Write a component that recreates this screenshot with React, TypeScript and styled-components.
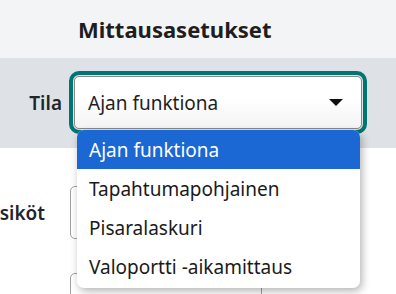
import styled, { createGlobalStyle } from 'styled-components'

const Global = createGlobalStyle`
  html, body {
    margin: 0;
    padding: 0;
    background: #ffffff;
    overflow: hidden;
  }
  body {
    font-family: "Noto Sans", "Open Sans", sans-serif;
    color: #212529;
  }
`

const Page = styled.div`
  width: 396px;
  height: 294px;
  position: relative;
  overflow: hidden;
`

const Header = styled.header`
  height: 58px;
  background-color: #f3f4f6;
  display: flex;
  align-items: center;
  padding-left: 78px;

  h1 {
    margin: 0;
    font-size: 22px;
    font-weight: 700;
    color: #1e1e1e;
  }
`

const Band = styled.div`
  height: 90px;
  background-color: #dee2e6;
`

const Row = styled.div<{ $top: number; $labelEnd: number }>`
  display: grid;
  grid-template-columns: 62px 1fr;
  align-items: center;
  column-gap: 12px;
  padding-top: ${(p) => p.$top}px;

  label {
    justify-self: end;
    white-space: nowrap;
    font-size: 19px;
    font-weight: 600;
    padding-right: ${(p) => 62 - p.$labelEnd}px;
  }
`

const SelectWrap = styled.div`
  position: relative;
  width: 288px;
`

const SelectBox = styled.div`
  box-sizing: border-box;
  height: 53px;
  display: flex;
  align-items: center;
  justify-content: space-between;
  padding: 0 18px 0 13px;
  border: 1px solid #8a8a8a;
  border-radius: 5px;
  background: linear-gradient(#ffffff 40%, #f4f4f4);
  outline: 4px solid #007572;
  outline-offset: 1px;
  font-size: 19px;
  color: #1f1f1f;
`

const Caret = styled.span`
  width: 0;
  height: 0;
  border-left: 7px solid transparent;
  border-right: 7px solid transparent;
  border-top: 7px solid #111;
`

const ListBox = styled.ul`
  position: absolute;
  top: 54px;
  left: 3px;
  width: 283px;
  margin: 0;
  padding: 0 0 2px;
  list-style: none;
  background: #ffffff;
  border-radius: 7px;
  overflow: hidden;
  box-shadow: 2px 3px 8px rgba(0, 0, 0, 0.3);
  z-index: 10;
`

const Option = styled.li<{ $active?: boolean }>`
  height: 39px;
  display: flex;
  align-items: center;
  padding-left: 12px;
  font-size: 19px;
  color: ${(p) => (p.$active ? '#ffffff' : '#1a1a1a')};
  background: ${(p) => (p.$active ? '#1b67d3' : 'transparent')};
`

const Input = styled.div<{ $width: number }>`
  box-sizing: border-box;
  width: ${(p) => p.$width}px;
  height: 53px;
  border: 1px solid #a0a0a0;
  border-radius: 5px;
  background: #fff;
  margin-left: -4px;
`

const options = ['Ajan funktiona', 'Tapahtumapohjainen', 'Pisaralaskuri', 'Valoportti -aikamittaus']

export default function App() {
  return (
    <Page>
      <Global />
      <Header>
        <h1>Mittausasetukset</h1>
      </Header>
      <Band>
        <Row $top={18} $labelEnd={62}>
          <label>Tila</label>
          <SelectWrap>
            <SelectBox>
              <span>Ajan funktiona</span>
              <Caret />
            </SelectBox>
            <ListBox>
              {options.map((o, i) => (
                <Option key={o} $active={i === 0}>{o}</Option>
              ))}
            </ListBox>
          </SelectWrap>
        </Row>
      </Band>
      <Row $top={38} $labelEnd={45}>
        <label>Yksiköt</label>
        <Input $width={290} />
      </Row>
      <Row $top={34} $labelEnd={45}>
        <span />
        <Input $width={192} />
      </Row>
    </Page>
  )
}
